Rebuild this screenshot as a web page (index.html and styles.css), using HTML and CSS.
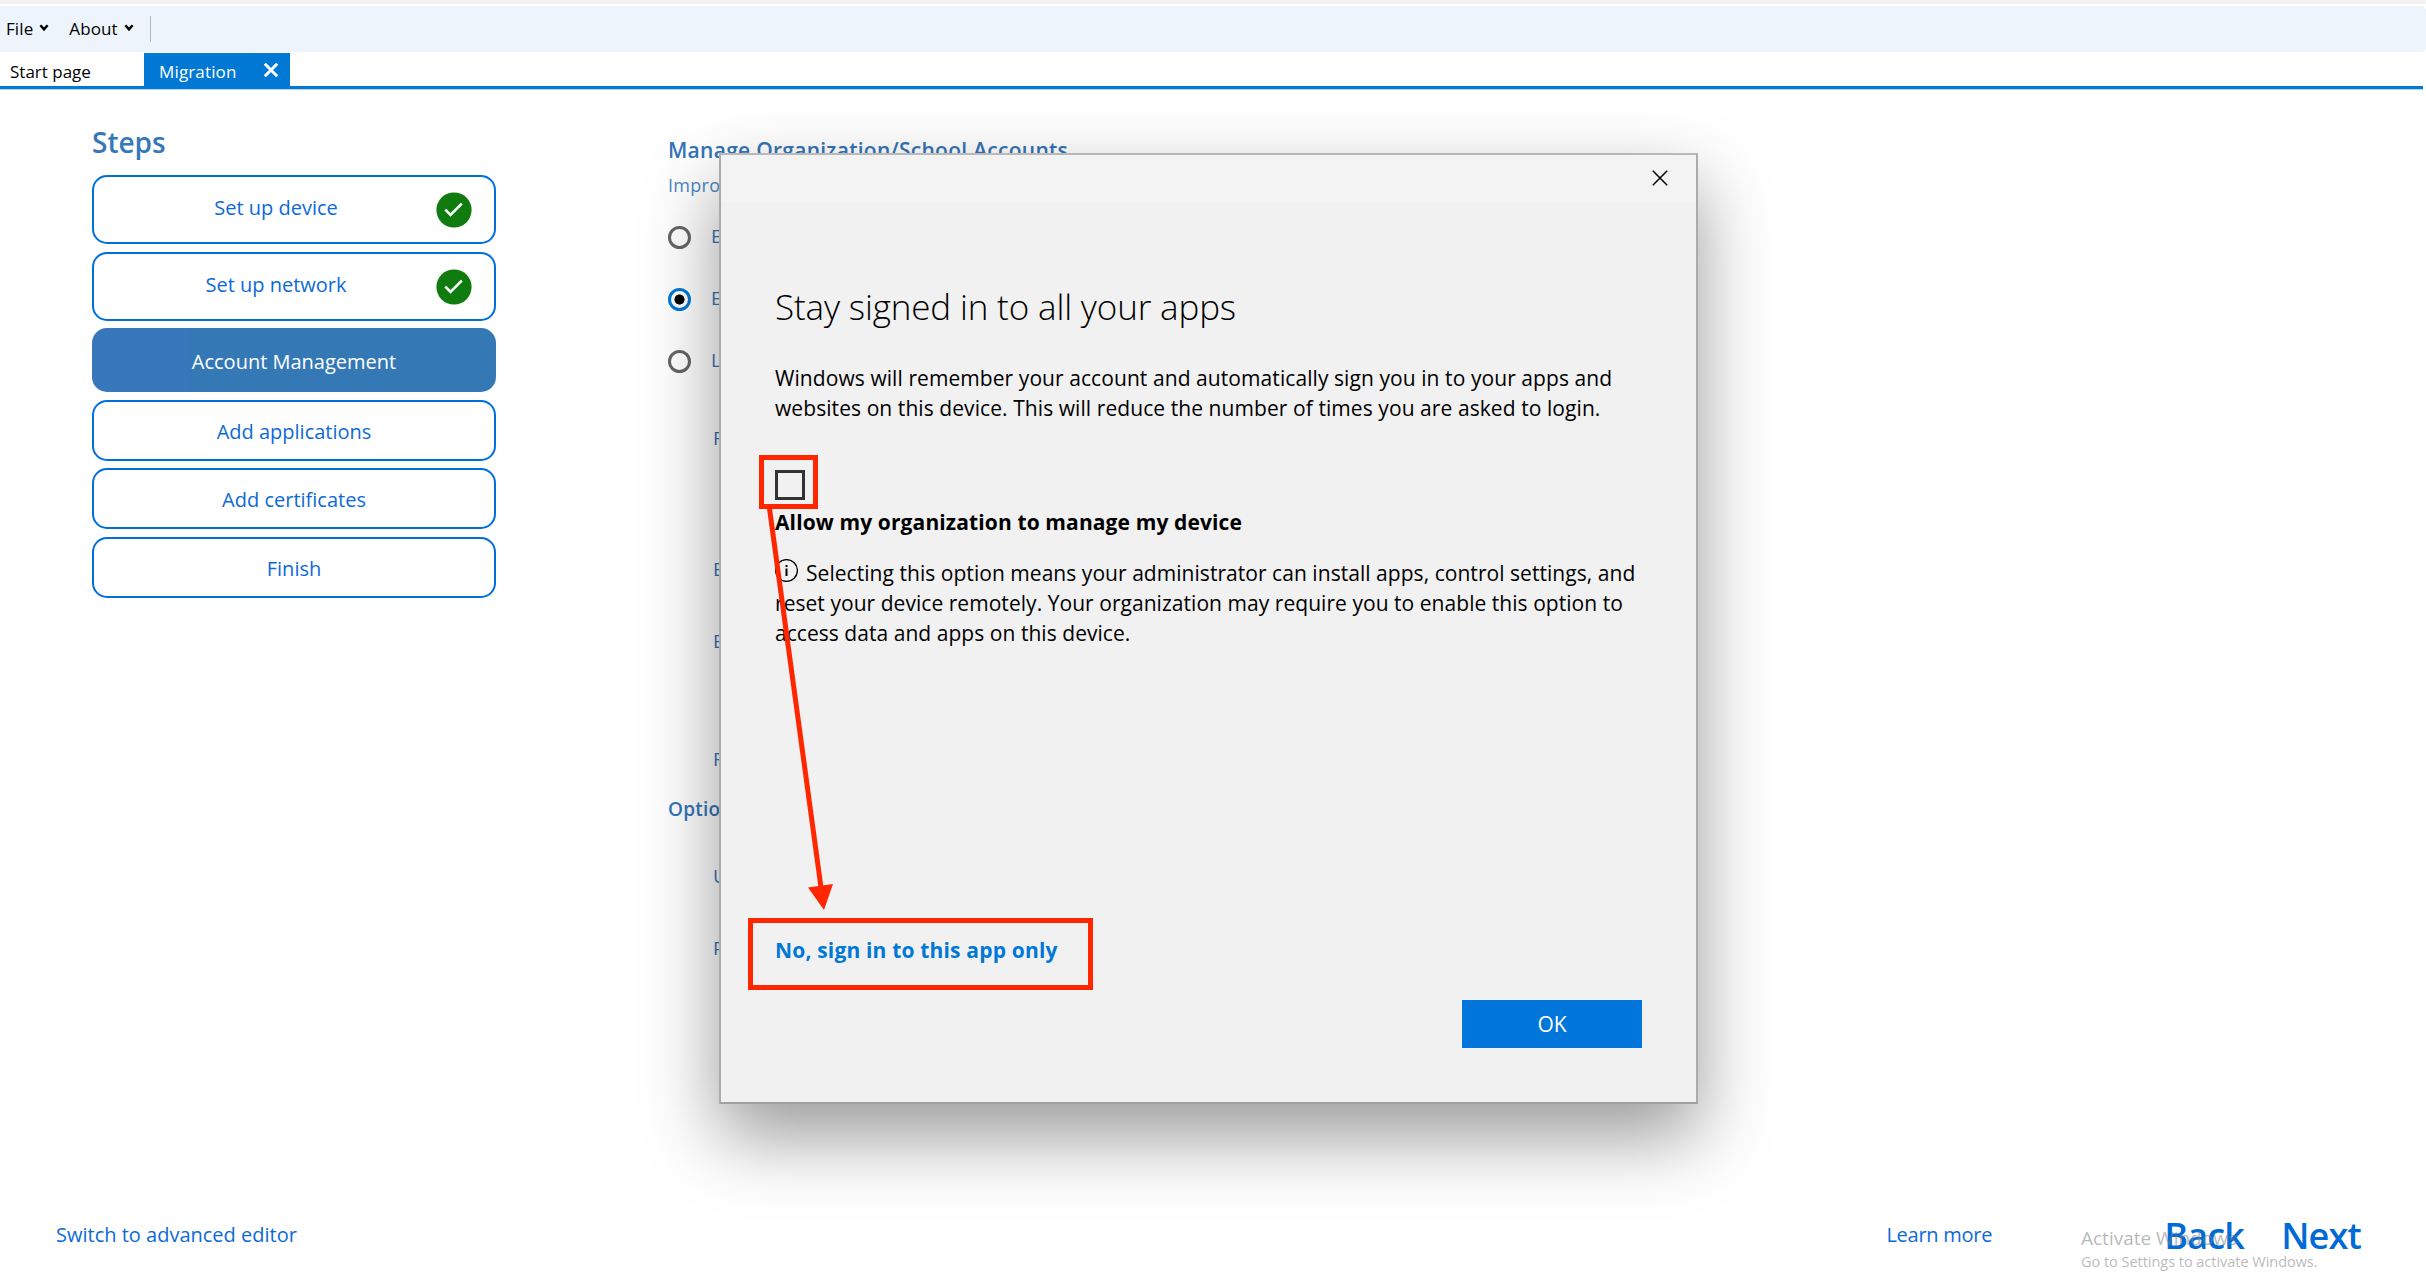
FILE: index.html
```html
<!DOCTYPE html>
<html lang="en">
<head>
<meta charset="utf-8">
<title>Migration</title>
<link rel="stylesheet" href="styles.css">
</head>
<body>
<div class="window-edge"></div>
<nav class="toolbar">
  <span class="menu">File<svg class="chevron" width="10" height="10" viewBox="0 0 10 10"><path d="M1.4 2.2 5 6.4 8.6 2.2"/></svg></span>
  <span class="menu">About<svg class="chevron" width="10" height="10" viewBox="0 0 10 10"><path d="M1.4 2.2 5 6.4 8.6 2.2"/></svg></span>
  <span class="divider"></span>
</nav>
<div class="tabs">
  <div class="tab tab-start">Start page</div>
  <div class="tab tab-active">Migration<svg width="16" height="16" viewBox="0 0 16 16"><path d="M1.8 1.8 14.2 14.2M14.2 1.8 1.8 14.2"/></svg></div>
</div>

<main class="workspace">
  <section class="steps">
    <h1>Steps</h1>
    <ol class="step-list">
      <li class="step done">Set up device<svg class="check" width="36" height="36" viewBox="0 0 36 36"><circle cx="18" cy="18" r="17.6"/><path d="M9.3 17.6 14.5 22.8 25.8 11.6"/></svg></li>
      <li class="step done">Set up network<svg class="check" width="36" height="36" viewBox="0 0 36 36"><circle cx="18" cy="18" r="17.6"/><path d="M9.3 17.6 14.5 22.8 25.8 11.6"/></svg></li>
      <li class="step current">Account Management</li>
      <li class="step">Add applications</li>
      <li class="step">Add certificates</li>
      <li class="step">Finish</li>
    </ol>
  </section>
  <section class="accounts">
    <h2>Manage Organization/School Accounts</h2>
    <p class="hint">Impro</p>
    <div class="choices">
      <label class="choice"><i class="radio"></i><span>E</span></label>
      <label class="choice"><i class="radio selected"></i><span>E</span></label>
      <label class="choice"><i class="radio"></i><span>L</span></label>
    </div>
    <div class="fields">
      <div class="field f-first">R</div>
      <div class="field f-second">E</div>
      <div class="field f-third">E</div>
      <div class="field f-fourth">R</div>
    </div>
    <h3>Option</h3>
    <div class="fields">
      <div class="field f-user">U</div>
      <div class="field f-third">P</div>
    </div>
  </section>
</main>

<footer class="footer">
  <a class="link switch">Switch to advanced editor</a>
  <a class="link learn">Learn more</a>
  <a class="nav-link back">Back</a>
  <a class="nav-link">Next</a>
</footer>

<div class="watermark">
  <div class="watermark-title">Activate Windows</div>
  <div class="watermark-text">Go to Settings to activate Windows.</div>
</div>

<div class="dialog">
  <header class="dialog-bar">
    <svg width="16" height="16" viewBox="0 0 16 16"><path d="M.8.8 15.2 15.2M15.2.8.8 15.2"/></svg>
  </header>
  <div class="dialog-body">
    <h2 class="dialog-title">Stay signed in to all your apps</h2>
    <p class="dialog-text">Windows will remember your account and automatically sign you in to your apps and<br>websites on this device. This will reduce the number of times you are asked to login.</p>
    <div class="checkbox"></div>
    <div class="checkbox-label">Allow my organization to manage my device</div>
    <p class="dialog-note"><svg width="23" height="23" viewBox="0 0 23 23"><circle cx="11.5" cy="11.5" r="10.9"/><path d="M11.5 9.4V17M11.5 6V8"/></svg>Selecting this option means your administrator can install apps, control settings, and<br>reset your device remotely. Your organization may require you to enable this option to<br>access data and apps on this device.</p>
    <a class="app-only">No, sign in to this app only</a>
    <button class="ok">OK</button>
  </div>
</div>

<div class="mark mark-checkbox"></div>
<div class="mark mark-link"></div>
<svg class="arrow" width="80" height="406" viewBox="0 0 80 406"><path class="shaft" d="M9.3 2 60.8 381"/><path class="head" d="M48 382.5 73 379 64 405Z"/></svg>
</body>
</html>
```
FILE: styles.css
```css
* { box-sizing: border-box; }
body {
  margin: 0;
  position: relative;
  width: 2426px;
  height: 1285px;
  overflow: hidden;
  display: flex;
  flex-direction: column;
  background: #fff;
  color: #000;
  font-family: "Open Sans", "Noto Sans", sans-serif;
  font-size: 20px;
  white-space: nowrap;
}
h1, h2, h3, p, ol { margin: 0; padding: 0; font-weight: inherit; }
svg { fill: none; stroke: currentColor; }

.window-edge { height: 4px; margin-bottom: 2px; background: #f2f2f2; }
.toolbar {
  height: 46px;
  padding-left: 6px;
  display: flex;
  align-items: center;
  border-radius: 0 5px 5px 0;
  background: #edf4fc;
  font-size: 17px;
  letter-spacing: .1px;
}
.menu { display: flex; align-items: center; height: 46px; margin-right: 20px; padding-bottom: 2px; }
.chevron { margin-left: 6px; stroke-width: 2.4; }
.divider { width: 1px; height: 26px; margin: -1px 0 0 -4px; background: #b4bac4; }

.tabs {
  display: flex;
  height: 36px;
  margin: 1px 3px 0 0;
  border-bottom: 3px solid #0078d4;
  box-shadow: 0 1px 0 #b5d8f3;
  font-size: 17px;
}
.tab { display: flex; align-items: center; line-height: 33px; padding-top: 3px; }
.tab-start { width: 144px; padding-left: 10px; }
.tab-active { width: 146px; padding-left: 15px; background: #0078d4; color: #fff; letter-spacing: .15px; }
.tab-active svg { margin: -2px 0 0 26px; stroke-width: 3; }

.workspace { flex: 1; display: flex; align-items: flex-start; padding: 35px 92px 0; }
.steps { width: 404px; }
.steps h1 { font-size: 28px; font-weight: 600; line-height: 36px; margin-bottom: 15px; color: #3577b9; }
.step-list { display: flex; flex-direction: column; gap: 7.5px; list-style: none; }
.step {
  position: relative;
  display: flex;
  align-items: center;
  justify-content: center;
  height: 61px;
  padding-top: 2px;
  border: 2px solid #006fdc;
  border-radius: 15px;
  color: #0c6ad8;
}
.step.done { height: 69px; padding: 0 36px 4px 0; }
.step.current {
  height: 64px;
  padding-top: 2px;
  border: 0;
  background: linear-gradient(90deg, #3777bc 98px, #3479b6 98px);
  color: #fff;
}
.check { position: absolute; right: 22px; top: 15px; stroke: #fff; stroke-width: 2.6; }
.check circle { fill: #107c10; stroke: none; }

.accounts { margin: 14px 0 0 172px; color: #3475b7; font-size: 19px; line-height: 24px; }
.accounts h2 { font-size: 21px; font-weight: 600; letter-spacing: .27px; }
.hint { margin-top: 11px; font-size: 18px; letter-spacing: .3px; color: #4b87c3; }
.choices { padding-top: 9px; }
.choice { display: flex; align-items: center; gap: 20px; height: 62px; }
.choice span { padding-bottom: 2px; }
.radio { width: 23px; height: 23px; border: 3px solid #666; border-radius: 50%; background: #fff; }
.radio.selected { border-color: #0078d7; background: radial-gradient(circle, #000 4.7px, #fff 5.4px); }
.field { padding-left: 45px; }
.f-first { margin-top: 34px; }
.f-second { margin-top: 107px; }
.f-third { margin-top: 48px; }
.f-fourth { margin-top: 94px; }
.f-user { margin-top: 43px; }
.accounts h3 { margin-top: 26px; font-size: 19px; font-weight: 600; letter-spacing: .2px; }

.footer { display: flex; align-items: center; height: 60px; margin: 0 65px 20px 56px; color: #0c6ad8; }
.learn { margin-left: auto; letter-spacing: -.25px; }
.link { padding-bottom: 2px; }
.nav-link { font-size: 36px; font-weight: 600; letter-spacing: -.8px; color: #006bd6; }
.back { margin: 0 37px 0 172px; }

.watermark { position: absolute; left: 2081px; top: 1224px; color: rgba(125, 125, 125, .55); }
.watermark-title { font-size: 19px; line-height: 28px; }
.watermark-text { font-size: 14.5px; line-height: 20px; letter-spacing: -.03px; }

.dialog {
  position: absolute;
  left: 719px;
  top: 153px;
  width: 979px;
  height: 951px;
  border: 2px solid;
  border-color: #b9b9b9 #ababab #a0a0a0;
  background: #f1f1f1;
  box-shadow: 0 32px 70px rgba(0, 0, 0, .4);
}
.dialog-bar { display: flex; justify-content: flex-end; height: 47px; padding: 15px 28px 0 0; background: #f3f3f3; }
.dialog-bar svg { stroke-width: 1.5; }
.dialog-body { display: flex; flex-direction: column; align-items: flex-start; padding: 81px 54px 0; font-size: 21px; line-height: 30px; }
.dialog-title { font-size: 35px; font-weight: 340; line-height: 48px; letter-spacing: -.15px; }
.dialog-text { margin-top: 32px; letter-spacing: .075px; }
.checkbox { width: 30px; height: 30px; margin: 47px 0 7px; border: 3px solid #333; }
.checkbox-label { font-weight: 700; letter-spacing: .12px; }
.dialog-note { margin-top: 21px; letter-spacing: .045px; }
.dialog-note svg { margin: 0 8px -1px 0; stroke-width: 1.3; }
.dialog-note path { stroke-width: 2; }
.app-only { margin-top: 287px; font-weight: 700; letter-spacing: .17px; color: #0078d7; }
.ok { align-self: flex-end; width: 180px; height: 48px; margin-top: 35px; padding: 0 0 1px; border: 0; background: #0076db; color: #fff; font: inherit; }

.mark { position: absolute; border: 5px solid #ff2600; }
.mark-checkbox { left: 759px; top: 455px; width: 59px; height: 54px; }
.mark-link { left: 748px; top: 918px; width: 345px; height: 72px; }
.arrow { position: absolute; left: 760px; top: 505px; }
.shaft { stroke: #ff2600; stroke-width: 5; }
.head { fill: #ff2600; stroke: none; }
```
